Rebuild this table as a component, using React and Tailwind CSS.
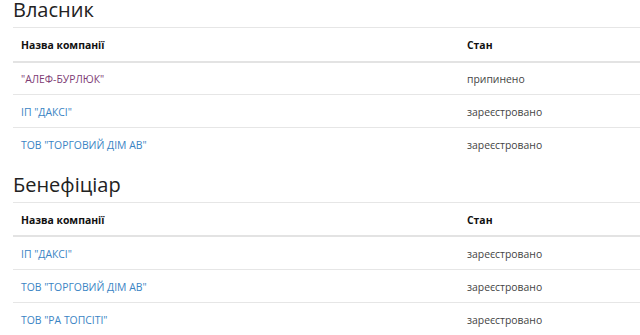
export default function App() {
  const sections = [
    {
      title: "Власник",
      rows: [
        { name: '"АЛЕФ-БУРЛЮК"', status: "припинено", visited: true },
        { name: 'ІП "ДАКСІ"', status: "зареєстровано" },
        { name: 'ТОВ "ТОРГОВИЙ ДІМ АВ"', status: "зареєстровано" },
      ],
    },
    {
      title: "Бенефіціар",
      rows: [
        { name: 'ІП "ДАКСІ"', status: "зареєстровано" },
        { name: 'ТОВ "ТОРГОВИЙ ДІМ АВ"', status: "зареєстровано" },
        { name: 'ТОВ "РА ТОПСІТІ"', status: "зареєстровано" },
      ],
    },
  ];
  return (
    <div className="w-[640px] h-[335px] overflow-hidden bg-white pl-[13px] font-['Open_Sans',sans-serif] text-[#333]">
      {sections.map((s, i) => (
        <div key={s.title} className={i > 0 ? "mt-[14px]" : ""}>
          <h2 className="text-[20px] leading-[20px] mb-[7px] text-[#222] font-normal">{s.title}</h2>
          <table className="w-[700px] border-collapse text-[10.4px]">
            <thead>
              <tr>
                <th className="w-[446px] text-left font-bold px-[8px] pt-[4px] h-[34px] border-t border-t-[#e6e6e6] border-b-2 border-b-[#e3e3e3] text-[#111]">Назва компанії</th>
                <th className="text-left font-bold px-[8px] pt-[4px] h-[34px] border-t border-t-[#e6e6e6] border-b-2 border-b-[#e3e3e3] text-[#111]">Стан</th>
              </tr>
            </thead>
            <tbody>
              {s.rows.map((r) => (
                <tr key={r.name} className="h-[33px] border-t border-[#e6e6e6]">
                  <td className="px-[8px] pt-[4px]">
                    <a className={r.visited ? "text-[#7d3b74]" : "text-[#3a84c4]"}>{r.name}</a>
                  </td>
                  <td className="px-[8px] pt-[4px] text-[#444]">{r.status}</td>
                </tr>
              ))}
            </tbody>
          </table>
        </div>
      ))}
    </div>
  );
}
